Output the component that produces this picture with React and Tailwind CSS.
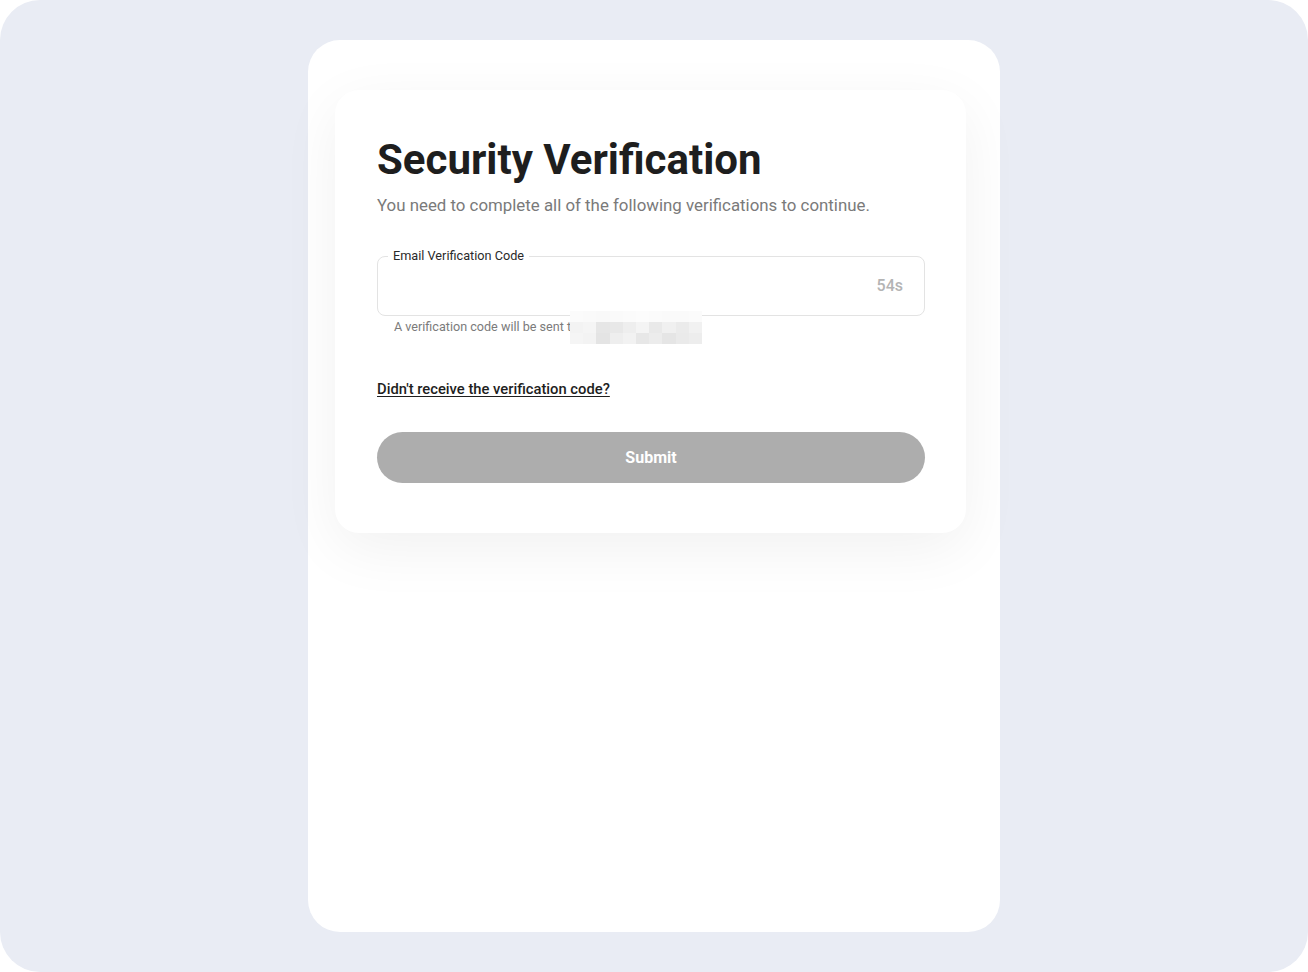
const blur = [
  ["#fbfbfb", "#fafafa", "#f9f9f9", "#fafafa", "#fbfbfb", "#fcfcfc", "#fbfbfb", "#fafafa", "#fafafa", "#fbfbfb"],
  ["#f3f3f3", "#f5f5f5", "#e6e6e6", "#e8e8e8", "#eeeeee", "#f4f4f4", "#e9e9e9", "#f0f0f0", "#ebebeb", "#f1f1f1"],
  ["#f5f5f5", "#f3f3f3", "#e4e4e4", "#eeeeee", "#f2f2f2", "#e7e7e7", "#ececec", "#e5e5e5", "#eaeaea", "#ededed"],
];

const App = () => {
  return (
    <div className="min-h-screen bg-white font-['Roboto',sans-serif]">
      <div className="w-[1308px] h-[972px] rounded-[40px] bg-[#e9ecf4] flex justify-center pt-[40px]">
        <div className="w-[692px] h-[892px] bg-white rounded-[32px] pt-[50px] pl-[27px]">
          {/* CARD */}
          <div className="w-[631px] bg-white rounded-[24px] shadow-[0_16px_60px_rgba(0,0,0,0.06)] pl-[42px] pr-[41px] pt-[46px] pb-[50px]">
            <h1 className="text-[42px] leading-[48px] font-bold text-[#1e1e1e]">
              Security Verification
            </h1>
            <p className="mt-[11px] text-[16.85px] leading-[20px] text-[#7a7a7a]">
              You need to complete all of the following verifications to continue.
            </p>

            {/* INPUT */}
            <div className="relative mt-[41px]">
              <fieldset className="h-[66px] border border-[#e3e3e3] rounded-[8px] px-[10px] -mt-[6px]">
                <legend className="text-[12.7px] leading-[12px] text-[#2a2a2a] px-[5px]">
                  Email Verification Code
                </legend>
              </fieldset>
              <span className="absolute right-[22px] top-[24px] text-[16px] font-medium text-[#b4b4b4]">
                54s
              </span>
              <div className="relative flex items-center mt-[4px] pl-[17px] h-[14px]">
                <span className="text-[12.6px] leading-[14px] text-[#7b7b7b]">
                  A verification code will be sent t
                </span>
                <div className="absolute left-[193px] -top-[9px] grid grid-cols-10 w-[132px] h-[33px]">
                  {blur.flat().map((c, i) => (
                    <div key={i} style={{ backgroundColor: c }} />
                  ))}
                </div>
              </div>
            </div>

            <a className="block mt-[46px] text-[14.75px] leading-[18px] font-medium text-[#1e1e1e] underline underline-offset-2">
              Didn't receive the verification code?
            </a>

            <button className="mt-[34px] w-full h-[51px] rounded-full bg-[#adadad] text-white text-[16px] font-bold">
              Submit
            </button>
          </div>
        </div>
      </div>
    </div>
  );
};

export default App;
